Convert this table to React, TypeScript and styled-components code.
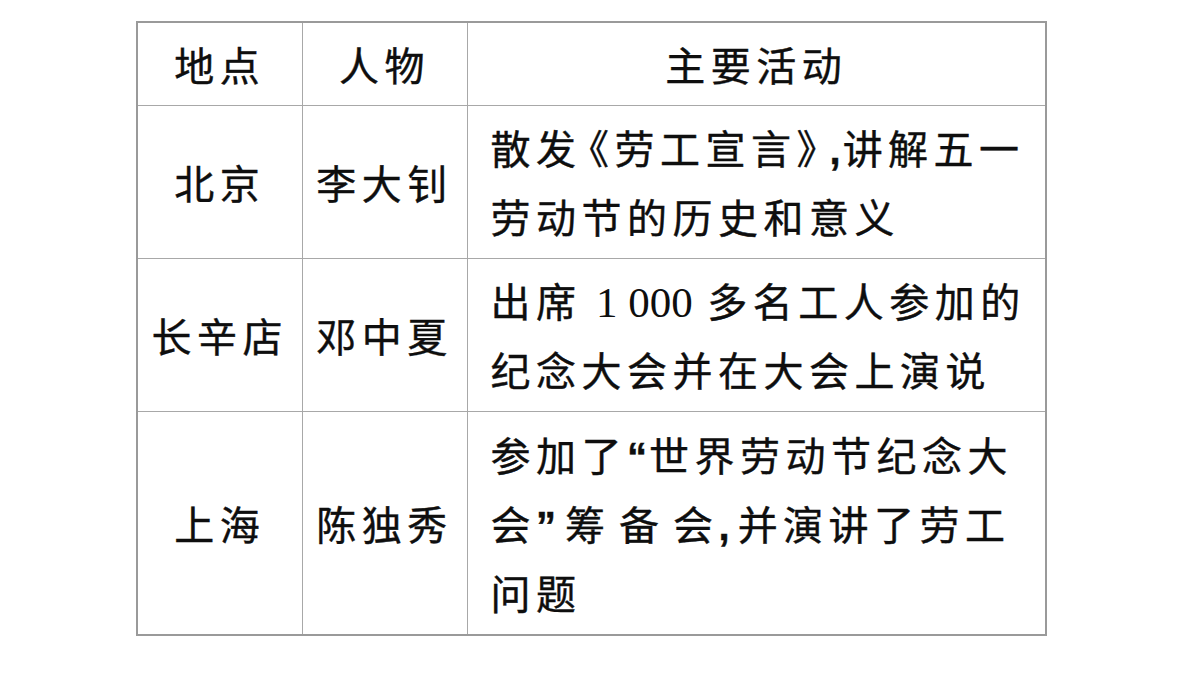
import React from "react";
import styled, { createGlobalStyle } from "styled-components";

const Global = createGlobalStyle`
  html, body { margin: 0; padding: 0; background: #fff; }
  body { font-family: "Noto Sans CJK SC", "Noto Sans", sans-serif; color: #111; }
`;

const Page = styled.div`
  width: 1200px;
  height: 675px;
  padding-top: 21px;
  padding-left: 136px;
  box-sizing: border-box;
`;

const Table = styled.table`
  border-collapse: collapse;
  border: 2px solid #9a9a9a;
  table-layout: fixed;
  width: 911px;
`;

const Row = styled.tr<{ $h: number }>`
  height: ${(p) => p.$h}px;
`;

const Cell = styled.td<{ $w?: number; $left?: boolean }>`
  border: 1px solid #a8a8a8;
  padding: ${(p) => (p.$left ? "0 0 0 23px" : "0")};
  ${(p) => (p.$w ? `width: ${p.$w}px;` : "")}
  text-align: ${(p) => (p.$left ? "left" : "center")};
  vertical-align: middle;
  font-size: 40px;
  line-height: 66px;
  letter-spacing: 5.5px;
  font-weight: 400;
  white-space: nowrap;
  box-sizing: border-box;
  color: #0e0e0e;
  -webkit-text-stroke: 0.4px #0e0e0e;
`;

const Num = styled.span`
  font-family: "Liberation Serif", serif;
  font-weight: 400;
  font-size: 43px;
  letter-spacing: 0;
  -webkit-text-stroke: 0;
`;

const Punct = styled.span<{ $gap?: number }>`
  font-family: "Liberation Sans", sans-serif;
  font-weight: 700;
  letter-spacing: ${(p) => p.$gap ?? 2}px;
`;

const Tight = styled.span`
  letter-spacing: -7px;
`;

const Spread = styled.span`
  letter-spacing: 14px;
`;

export default function App() {
  return (
    <>
      <Global />
      <Page>
        <Table>
          <tbody>
            <Row $h={83}>
              <Cell $w={165}>地点</Cell>
              <Cell $w={165}>人物</Cell>
              <Cell>主要活动</Cell>
            </Row>
            <Row $h={153}>
              <Cell>北京</Cell>
              <Cell>李大钊</Cell>
              <Cell $left>
                散<Tight>发</Tight>《劳工宣言<Tight>》</Tight>
                <Punct>,</Punct>讲解五一
                <br />
                劳动节的历史和意义
              </Cell>
            </Row>
            <Row $h={153}>
              <Cell>长辛店</Cell>
              <Cell>邓中夏</Cell>
              <Cell $left>
                出席 <Num>1 000</Num> 多名工人参加的
                <br />
                纪念大会并在大会上演说
              </Cell>
            </Row>
            <Row $h={224}>
              <Cell>上海</Cell>
              <Cell>陈独秀</Cell>
              <Cell $left>
                参加了<Punct>“</Punct>世界劳动节纪念大
                <br />
                会<Punct $gap={9}>”</Punct>
                <Spread>筹备</Spread>会<Punct $gap={8}>,</Punct>并演讲了劳工
                <br />
                问题
              </Cell>
            </Row>
          </tbody>
        </Table>
      </Page>
    </>
  );
}
